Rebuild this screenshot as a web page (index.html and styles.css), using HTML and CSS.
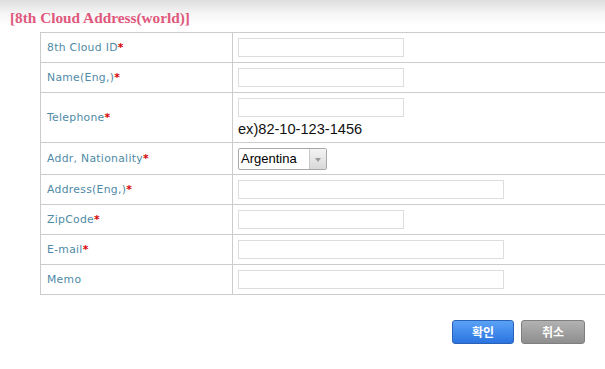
FILE: index.html
```html
<!DOCTYPE html>
<html lang="ko">
<head>
    <meta charset="UTF-8">
    <title>8th Cloud Address(world)</title>
    <link rel="stylesheet" href="styles.css">
</head>
<body>
    <div class="page">
        <!-- Title -->
        <div class="title-bar">
            <h1>[8th Cloud Address(world)]</h1>
        </div>

        <!-- Address form -->
        <table class="form-table">
            <tr>
                <th>8th Cloud ID<span class="req">*</span></th>
                <td><input type="text" class="inp short"></td>
            </tr>
            <tr>
                <th>Name(Eng,)<span class="req">*</span></th>
                <td><input type="text" class="inp short"></td>
            </tr>
            <tr class="tall">
                <th>Telephone<span class="req">*</span></th>
                <td>
                    <input type="text" class="inp short">
                    <div class="hint">ex)82-10-123-1456</div>
                </td>
            </tr>
            <tr class="sel-row">
                <th>Addr, Nationality<span class="req">*</span></th>
                <td>
                    <div class="select-box">
                        <span class="select-value">Argentina</span>
                        <span class="select-arrow"></span>
                    </div>
                </td>
            </tr>
            <tr>
                <th>Address(Eng,)<span class="req">*</span></th>
                <td><input type="text" class="inp long"></td>
            </tr>
            <tr>
                <th>ZipCode<span class="req">*</span></th>
                <td><input type="text" class="inp short"></td>
            </tr>
            <tr>
                <th>E-mail<span class="req">*</span></th>
                <td><input type="text" class="inp long"></td>
            </tr>
            <tr>
                <th>Memo</th>
                <td><input type="text" class="inp long"></td>
            </tr>
        </table>

        <!-- Buttons -->
        <div class="buttons">
            <button class="btn btn-ok">확인</button>
            <button class="btn btn-cancel">취소</button>
        </div>
    </div>
</body>
</html>
```

FILE: styles.css
```css
body {
    margin: 0;
    padding: 0;
    background-color: #fff;
    font-family: 'DejaVu Sans', Verdana, sans-serif;
    overflow: hidden;
}

.page {
    width: 605px;
    height: 369px;
}

/* Title bar with soft gray fade */
.title-bar {
    height: 32px;
    background: linear-gradient(to bottom, #dedede 0px, #f6f6f6 14px, #fff 26px);
    padding-left: 10px;
    box-sizing: border-box;
}

.title-bar h1 {
    margin: 0;
    padding-top: 9px;
    font-family: 'Liberation Serif', 'Times New Roman', serif;
    font-size: 15.3px;
    font-weight: bold;
    line-height: 18px;
    color: #e0587c;
}

/* Form table */
.form-table {
    margin-left: 40px;
    width: 575px;
    border-collapse: collapse;
}

.form-table th,
.form-table td {
    border: 1px solid #cccccc;
    height: 29px;
    padding: 0;
}

.form-table th {
    width: 185px;
    padding-left: 6px;
    text-align: left;
    font-weight: normal;
    font-size: 10.8px;
    letter-spacing: 0.3px;
    color: #4f8aa6;
}

.form-table td {
    padding-left: 5px;
}

.form-table tr.tall th {
    height: 49px;
}

.form-table tr.tall td {
    height: 44px;
    vertical-align: top;
    padding-top: 5px;
}

.form-table tr.sel-row th,
.form-table tr.sel-row td {
    height: 31px;
}

.req {
    color: #d40000;
    font-weight: bold;
}

.inp {
    display: block;
    height: 19px;
    box-sizing: border-box;
    border: 1px solid #dddddd;
    margin: 0;
    padding: 0;
    background-color: #fff;
}

.inp.short {
    width: 166px;
}

.inp.long {
    width: 266px;
}

.hint {
    margin-top: 3px;
    font-family: 'Liberation Sans', Arial, sans-serif;
    font-size: 14.6px;
    line-height: 18px;
    color: #111;
}

/* Fake dropdown */
.select-box {
    display: flex;
    width: 89px;
    height: 22px;
    box-sizing: border-box;
    border: 1px solid #a8a8a8;
    border-radius: 2px;
    background-color: #fff;
}

.select-value {
    flex: 1;
    padding-left: 2px;
    font-family: 'Liberation Sans', Arial, sans-serif;
    font-size: 13px;
    line-height: 20px;
    color: #000;
}

.select-arrow {
    position: relative;
    width: 16px;
    background: linear-gradient(to bottom, #f4f4f4, #d8d8d8);
    border-left: 1px solid #c8c8c8;
}

.select-arrow::after {
    content: '';
    position: absolute;
    left: 5px;
    top: 9px;
    border-left: 3px solid transparent;
    border-right: 3px solid transparent;
    border-top: 4px solid #999;
}

/* Buttons */
.buttons {
    display: flex;
    justify-content: flex-end;
    gap: 7px;
    padding-top: 25px;
    padding-right: 20px;
}

.btn {
    height: 24px;
    border-radius: 3px;
    font-family: 'Noto Sans CJK KR', sans-serif;
    font-size: 12px;
    font-weight: bold;
    color: #fff;
    padding: 0;
    line-height: 20px;
    cursor: pointer;
}

.btn-ok {
    width: 62px;
    background: linear-gradient(to bottom, #5aa2f6, #2b74e0);
    border: 1px solid #2a62b8;
}

.btn-cancel {
    width: 64px;
    background: linear-gradient(to bottom, #b2b2b2, #8e8e8e);
    border: 1px solid #7f7f7f;
}
```
